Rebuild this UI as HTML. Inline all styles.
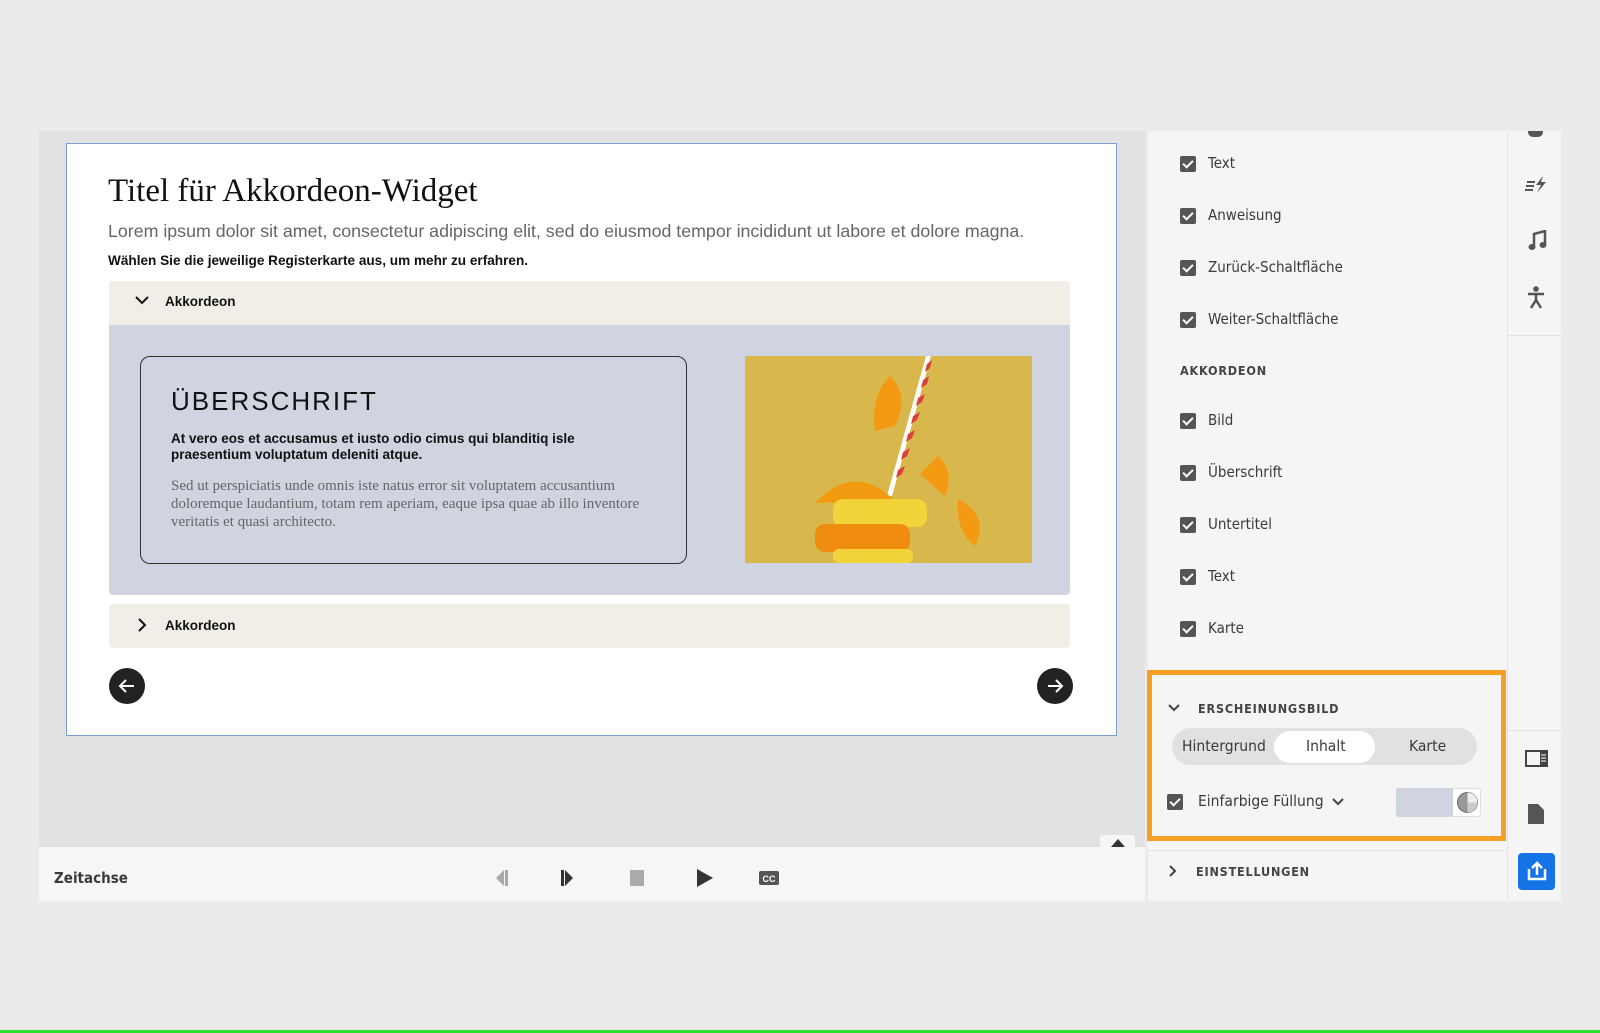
<!DOCTYPE html>
<html><head><meta charset="utf-8"><style>
*{box-sizing:border-box;margin:0;padding:0}
body{width:1600px;height:1033px;background:#ebebeb;position:relative;overflow:hidden;font-family:"Liberation Sans",sans-serif}
.a{position:absolute}
.ui{font-family:"DejaVu Sans Condensed","Liberation Sans",sans-serif;color:#3a3a3a}
.cb{position:absolute;width:16px;height:16px;background:#555;border-radius:2px}
.cb:after{content:"";position:absolute;left:5px;top:2px;width:4px;height:8px;border:solid #fff;border-width:0 2px 2px 0;transform:rotate(45deg)}
.lbl{position:absolute;font-size:15px;color:#3a3a3a;font-family:"DejaVu Sans Condensed","Liberation Sans",sans-serif}
.hd{position:absolute;font-size:12.5px;font-weight:bold;letter-spacing:.8px;color:#444;font-family:"DejaVu Sans Condensed","Liberation Sans",sans-serif}
</style></head><body>
<div class="a" style="left:39px;top:131px;width:1106px;height:715px;background:#e2e2e2"></div>
<div class="a" style="left:39px;top:846px;width:1106px;height:55px;background:#f6f6f6;border-top:1px solid #ddd"></div>
<div class="a" style="left:66px;top:143px;width:1051px;height:593px;background:#fff;border:1.5px solid #7a9fd0"></div>
<div class="a" style="left:108px;top:173px;font-family:'Liberation Serif',serif;font-size:33px;color:#111">Titel für Akkordeon-Widget</div>
<div class="a" style="left:108px;top:221px;font-size:17.8px;color:#666">Lorem ipsum dolor sit amet, consectetur adipiscing elit, sed do eiusmod tempor incididunt ut labore et dolore magna.</div>
<div class="a" style="left:108px;top:253px;font-size:13.6px;font-weight:bold;color:#111">Wählen Sie die jeweilige Registerkarte aus, um mehr zu erfahren.</div>
<div class="a" style="left:109px;top:281px;width:961px;height:44px;background:#f0eee6;border-radius:4px 4px 0 0"></div>
<svg class="a" style="left:135px;top:294px" width="14" height="12"><path d="M1 3 L7 9 L13 3" stroke="#111" stroke-width="2" fill="none"/></svg>
<div class="a" style="left:165px;top:294px;font-size:13.5px;font-weight:bold;color:#111">Akkordeon</div>
<div class="a" style="left:109px;top:325px;width:961px;height:270px;background:#d0d3e0;border-radius:0 0 4px 4px"></div>
<div class="a" style="left:140px;top:356px;width:547px;height:208px;border:1.5px solid #333;border-radius:10px"></div>
<div class="a" style="left:171px;top:386px;font-size:26px;letter-spacing:2px;color:#111">ÜBERSCHRIFT</div>
<div class="a" style="left:171px;top:431px;font-size:13.5px;font-weight:bold;color:#111;line-height:16px">At vero eos et accusamus et iusto odio cimus qui blanditiq isle<br>praesentium voluptatum deleniti atque.</div>
<div class="a" style="left:171px;top:477px;font-family:'Liberation Serif',serif;font-size:15px;color:#666;line-height:18px">Sed ut perspiciatis unde omnis iste natus error sit voluptatem accusantium<br>doloremque laudantium, totam rem aperiam, eaque ipsa quae ab illo inventore<br>veritatis et quasi architecto.</div>
<svg class="a" style="left:745px;top:356px" width="287" height="207" viewBox="0 0 287 207">
<rect width="287" height="207" fill="#d8b74c"/>
<path d="M181 0 L186 0 L147 140 L142 140Z" fill="#fff"/>
<path d="M182 8 L187 4 L185 12 L180 16Z M178 24 L184 20 L182 28 L176 32Z M173 42 L180 38 L177 46 L171 50Z M168 60 L175 56 L172 64 L166 68Z M163 78 L170 74 L167 82 L161 86Z M158 96 L165 92 L162 100 L156 104Z M153 114 L160 110 L157 118 L151 122Z" fill="#d9403a"/>
<path d="M145 20 Q165 40 150 70 L130 75 Q125 40 145 20Z" fill="#f39a12"/>
<path d="M193 100 Q210 115 200 140 L175 118Z" fill="#f39a12"/>
<path d="M213 143 Q245 160 230 190 Q210 175 213 143Z" fill="#f39a12"/>
<path d="M70 147 Q110 105 150 145 Z" fill="#f29a10"/>
<rect x="88" y="143" width="94" height="28" rx="10" fill="#f2d33a"/>
<rect x="70" y="168" width="95" height="28" rx="10" fill="#f08c10"/>
<rect x="88" y="193" width="80" height="14" rx="6" fill="#f2d33a"/>
</svg>
<div class="a" style="left:109px;top:604px;width:961px;height:44px;background:#f0eee6;border-radius:4px"></div>
<svg class="a" style="left:137px;top:618px" width="10" height="14"><path d="M2 1 L8 7 L2 13" stroke="#111" stroke-width="2" fill="none"/></svg>
<div class="a" style="left:165px;top:618px;font-size:13.5px;font-weight:bold;color:#111">Akkordeon</div>
<svg class="a" style="left:109px;top:668px" width="36" height="36"><circle cx="18" cy="18" r="18" fill="#222"/><path d="M25 18 H11 M17 12 L11 18 L17 24" stroke="#fff" stroke-width="2" fill="none"/></svg>
<svg class="a" style="left:1037px;top:668px" width="36" height="36"><circle cx="18" cy="18" r="18" fill="#222"/><path d="M11 18 H25 M19 12 L25 18 L19 24" stroke="#fff" stroke-width="2" fill="none"/></svg>
<div class="a" style="left:1100px;top:835px;width:35px;height:12px;background:#f6f6f6;border-radius:3px 3px 0 0"></div>
<svg class="a" style="left:1111px;top:839px" width="14" height="8"><path d="M0 8 L7 0 L14 8Z" fill="#333"/></svg>
<div class="a ui" style="left:54px;top:869px;font-size:15px;font-weight:bold">Zeitachse</div>
<svg class="a" style="left:494px;top:868px" width="290" height="20">
<path d="M2 10 L10 2 V18Z" fill="#aaa"/><rect x="11" y="2" width="3" height="16" fill="#aaa"/>
<rect x="67" y="2" width="3" height="16" fill="#333"/><path d="M71 2 L79 10 L71 18Z" fill="#333"/>
<rect x="136" y="2" width="14" height="16" fill="#aaa"/>
<path d="M203 1 L219 10 L203 19Z" fill="#333"/>
<rect x="265" y="3" width="20" height="14" rx="2" fill="#555"/><text x="275" y="14" font-size="9" font-weight="bold" fill="#fff" text-anchor="middle" font-family="Liberation Sans">CC</text>
</svg>
<div class="a" style="left:1148px;top:131px;width:359px;height:770px;background:#f5f5f5"></div>
<div class="a" style="left:1507px;top:131px;width:54px;height:770px;background:#f5f5f5;border-left:1px solid #e4e4e4"></div>
<div class="a" style="left:1507px;top:335px;width:54px;height:1px;background:#e2e2e2"></div>
<div class="a" style="left:1507px;top:730px;width:54px;height:1px;background:#e2e2e2"></div>
<div class="a" style="left:1148px;top:850px;width:359px;height:1px;background:#e4e4e4"></div>
<div class="cb" style="left:1180px;top:156px"></div><div class="lbl" style="left:1208px;top:154px">Text</div>
<div class="cb" style="left:1180px;top:208px"></div><div class="lbl" style="left:1208px;top:206px">Anweisung</div>
<div class="cb" style="left:1180px;top:260px"></div><div class="lbl" style="left:1208px;top:258px">Zurück-Schaltfläche</div>
<div class="cb" style="left:1180px;top:312px"></div><div class="lbl" style="left:1208px;top:310px">Weiter-Schaltfläche</div>
<div class="hd" style="left:1180px;top:363px">AKKORDEON</div>
<div class="cb" style="left:1180px;top:413px"></div><div class="lbl" style="left:1208px;top:411px">Bild</div>
<div class="cb" style="left:1180px;top:465px"></div><div class="lbl" style="left:1208px;top:463px">Überschrift</div>
<div class="cb" style="left:1180px;top:517px"></div><div class="lbl" style="left:1208px;top:515px">Untertitel</div>
<div class="cb" style="left:1180px;top:569px"></div><div class="lbl" style="left:1208px;top:567px">Text</div>
<div class="cb" style="left:1180px;top:621px"></div><div class="lbl" style="left:1208px;top:619px">Karte</div>
<div class="a" style="left:1147px;top:670px;width:359px;height:171px;border:5px solid #f7a023"></div>
<svg class="a" style="left:1167px;top:703px" width="14" height="10"><path d="M2 2 L7 7 L12 2" stroke="#444" stroke-width="2" fill="none"/></svg>
<div class="hd" style="left:1198px;top:701px">ERSCHEINUNGSBILD</div>
<div class="a" style="left:1172px;top:728px;width:305px;height:37px;background:#e1e1e1;border-radius:19px"></div>
<div class="a" style="left:1274px;top:731px;width:101px;height:32px;background:#fff;border-radius:16px"></div>
<div class="lbl" style="left:1182px;top:737px;font-size:15.5px">Hintergrund</div>
<div class="lbl" style="left:1306px;top:737px;font-size:15.5px">Inhalt</div>
<div class="lbl" style="left:1409px;top:737px;font-size:15.5px">Karte</div>
<div class="cb" style="left:1167px;top:794px"></div><div class="lbl" style="left:1198px;top:792px;font-size:15.5px">Einfarbige Füllung</div>
<svg class="a" style="left:1331px;top:797px" width="14" height="10"><path d="M2 2 L7 7 L12 2" stroke="#444" stroke-width="2" fill="none"/></svg>
<div class="a" style="left:1396px;top:788px;width:85px;height:29px;background:#fff;border:1px solid #e0e0e0;border-radius:3px"></div>
<div class="a" style="left:1396px;top:788px;width:57px;height:29px;background:#d0d3e0;border-radius:3px 0 0 3px"></div>
<svg class="a" style="left:1456px;top:791px" width="23" height="23"><circle cx="11.5" cy="11.5" r="10" fill="#999" stroke="#666"/><path d="M11.5 1.5 A10 10 0 0 1 21.5 11.5 L11.5 11.5Z" fill="#eee"/><path d="M11.5 11.5 L21.5 11.5 A10 10 0 0 1 11.5 21.5Z" fill="#ccc"/></svg>
<svg class="a" style="left:1168px;top:864px" width="10" height="14"><path d="M2 2 L7 7 L2 12" stroke="#444" stroke-width="2" fill="none"/></svg>
<div class="hd" style="left:1196px;top:864px">EINSTELLUNGEN</div>
<div class="a" style="left:1528px;top:131px;width:15px;height:6px;background:#555;border-radius:0 0 5px 5px"></div>
<svg class="a" style="left:1525px;top:174px" width="22" height="20"><path d="M2 8 H10 M1 12 H9 M0 16 H8" stroke="#555" stroke-width="2"/><path d="M18 2 L11 11 H16 L12 19 L21 8 H16Z" fill="#555"/></svg>
<svg class="a" style="left:1527px;top:230px" width="20" height="22"><path d="M7 16 V4 L18 1 V14" stroke="#555" stroke-width="2.5" fill="none"/><ellipse cx="5" cy="17" rx="3.5" ry="3" fill="#555"/><ellipse cx="16" cy="15" rx="3.5" ry="3" fill="#555"/></svg>
<svg class="a" style="left:1526px;top:286px" width="20" height="24"><circle cx="10" cy="3" r="2.8" fill="#555"/><path d="M2 8 H18 M10 8 V14 L5 22 M10 14 L15 22" stroke="#555" stroke-width="2.5" fill="none"/></svg>
<svg class="a" style="left:1525px;top:750px" width="23" height="17"><rect x="1" y="1" width="21" height="15" fill="none" stroke="#444" stroke-width="2"/><rect x="15" y="1" width="7" height="15" fill="#444"/><path d="M16 5 H21 M16 8 H21 M16 11 H21" stroke="#fff" stroke-width="1"/></svg>
<svg class="a" style="left:1528px;top:804px" width="16" height="20"><path d="M0 0 H10 L16 6 V20 H0Z" fill="#555"/></svg>
<div class="a" style="left:1518px;top:853px;width:37px;height:37px;background:#1473e6;border-radius:4px"></div>
<svg class="a" style="left:1526px;top:860px" width="22" height="22"><path d="M3 9 V19 H19 V9" stroke="#fff" stroke-width="2.5" fill="none"/><path d="M11 15 V3 M6 8 L11 3 L16 8" stroke="#fff" stroke-width="2.5" fill="none"/></svg>
<div class="a" style="left:0;top:1030px;width:1600px;height:3px;background:#2ee02e"></div>
</body></html>
